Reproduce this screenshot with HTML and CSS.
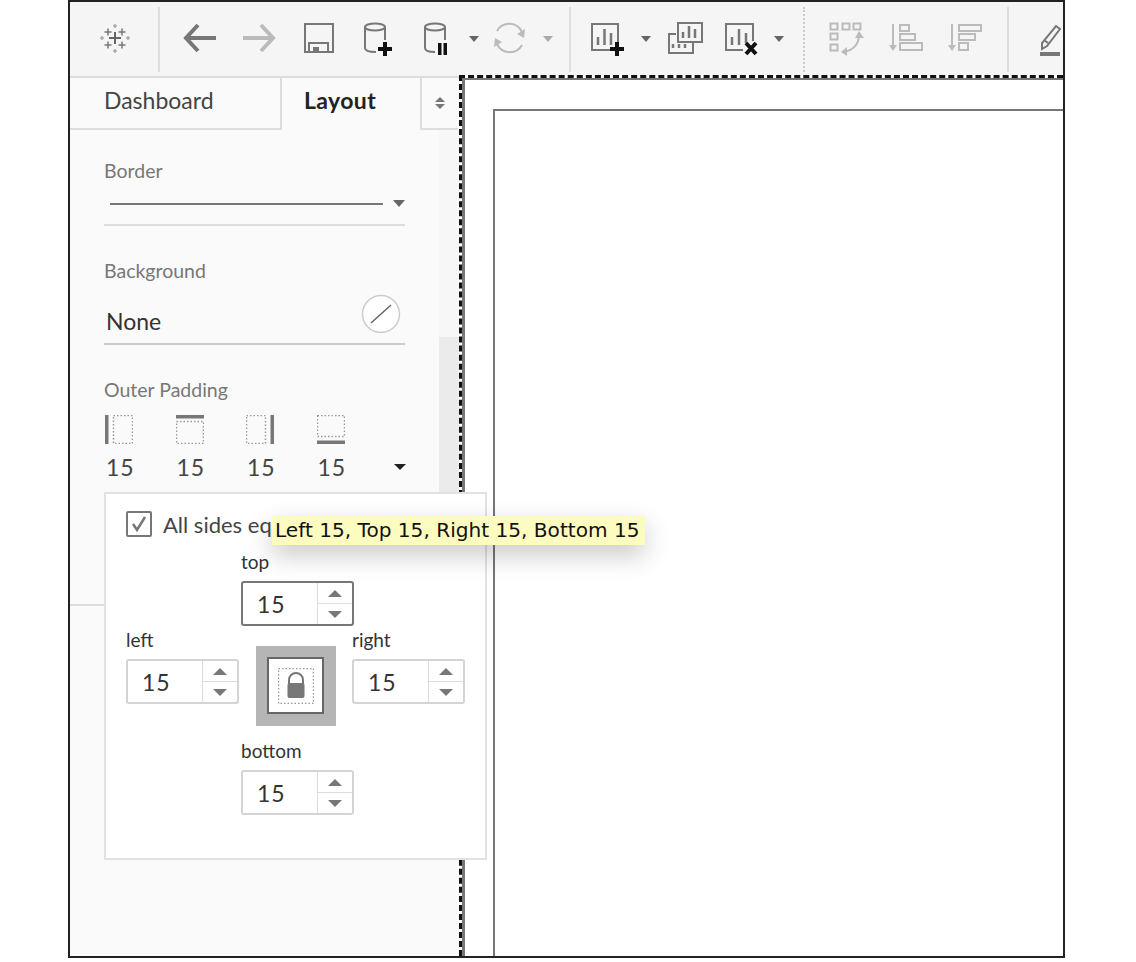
FILE: index.html
```html
<!DOCTYPE html>
<html lang="en">
<head>
    <meta charset="UTF-8">
    <meta name="viewport" content="width=device-width, initial-scale=1.0">
    <title>Dashboard Layout</title>
    <link rel="stylesheet" href="styles.css">
</head>
<body>
    <div class="window">
        <!-- Toolbar -->
        <div class="toolbar">
            <div class="tool-group logo-group">
                <svg class="tool" viewBox="0 0 36 36">
                    <path class="logo-big" d="M18 11V23M12 17H24"/>
                    <path class="logo-mid" d="M11 7.500V14.500M7.500 11H14.500M25 7.500V14.500M21.500 11H28.500M11 20.500V27.500M7.500 24H14.500M25 20.500V27.500M21.500 24H28.500"/>
                    <path class="logo-small" d="M18 3V7M16 5H20M5 15V19M3 17H7M31 15V19M29 17H33M18 28V32M16 30H20"/>
                </svg>
            </div>
            <div class="tool-group main-group">
                <svg class="tool" viewBox="0 0 36 36"><path class="thick" d="M34 17H5M16 4L4 17L16 30"/></svg>
                <svg class="tool" viewBox="0 0 36 36"><path class="thick faded" d="M2 17H31M20 4L32 17L20 30"/></svg>
                <svg class="tool" viewBox="0 0 36 36">
                    <rect class="line" x="5" y="3" width="28" height="28"/>
                    <path class="line" d="M9 31V22H28V31"/>
                    <rect class="solid" x="13" y="26" width="6" height="5"/>
                </svg>
                <svg class="tool" viewBox="0 0 36 36">
                    <ellipse class="line" cx="16" cy="6" rx="10" ry="3.5"/>
                    <path class="line" d="M6 6V27Q6 31 17 31M26 6V19"/>
                    <path class="mark" d="M26 21V35M19 28H33"/>
                </svg>
                <svg class="tool" viewBox="0 0 36 36">
                    <ellipse class="line" cx="17" cy="6" rx="10" ry="3.5"/>
                    <path class="line" d="M7 6V27Q7 31 17 31M27 6V19"/>
                    <rect class="black" x="20" y="22" width="3.5" height="12"/>
                    <rect class="black" x="25.5" y="22" width="3.5" height="12"/>
                </svg>
                <span class="caret"></span>
                <svg class="tool sync" viewBox="0 0 36 36">
                    <path class="line faded" d="M5 10A14 14 0 0 1 30 11M30 24A14 14 0 0 1 5 23"/>
                    <path class="solid faded" d="M33 8L32 17L25 13ZM2 26L3 17L10 21Z"/>
                </svg>
                <span class="caret faded"></span>
            </div>
            <div class="tool-group data-group">
                <svg class="tool" viewBox="0 0 36 36">
                    <path class="line" d="M24 29H4V3H30V22"/>
                    <path class="bars" d="M10 16V24M16.500 8V24M23 12V24"/>
                    <path class="mark" d="M29 21V35M22 28H36"/>
                </svg>
                <span class="caret"></span>
                <svg class="tool" viewBox="0 0 36 36">
                    <rect class="line" x="10" y="2" width="24" height="19"/>
                    <path class="bars" d="M15 11V17M21 5V17M27 8V17"/>
                    <path class="line" d="M8 13H1V32H25V22"/>
                    <path class="bars" d="M5 23V27M11 23V27M17 23V27"/>
                </svg>
                <svg class="tool" viewBox="0 0 36 36">
                    <path class="line" d="M22 29H5V3H32V20"/>
                    <path class="bars" d="M11 16V24M18 8V24M25 12V22"/>
                    <path class="mark" d="M25 22L35 33M35 22L25 33"/>
                </svg>
                <span class="caret"></span>
            </div>
            <div class="tool-group sort-group">
                <svg class="tool" viewBox="0 0 36 36">
                    <g class="line faded">
                        <rect x="1.500" y="2.500" width="7" height="6"/>
                        <rect x="13.500" y="2.500" width="7" height="6"/>
                        <rect x="24.500" y="2.500" width="7" height="6"/>
                        <rect x="1.500" y="12.500" width="7" height="6"/>
                        <rect x="1.500" y="23.500" width="7" height="6"/>
                        <path d="M30 15Q29 28 15 31"/>
                    </g>
                    <path class="solid faded" d="M30 10L35 17H26ZM12 31L18 26V35Z"/>
                </svg>
                <svg class="tool" viewBox="0 0 36 36">
                    <g class="line faded">
                        <path d="M5 3V27"/>
                        <rect x="12" y="4" width="9" height="6"/>
                        <rect x="12" y="13" width="15" height="6"/>
                        <rect x="12" y="22" width="22" height="7"/>
                    </g>
                    <path class="solid faded" d="M1 24H9L5 30Z"/>
                </svg>
                <svg class="tool" viewBox="0 0 36 36">
                    <g class="line faded">
                        <path d="M5 3V27"/>
                        <rect x="12" y="4" width="22" height="6"/>
                        <rect x="12" y="13" width="16" height="6"/>
                        <rect x="12" y="22" width="9" height="7"/>
                    </g>
                    <path class="solid faded" d="M1 24H9L5 30Z"/>
                </svg>
            </div>
            <div class="tool-group pen-group">
                <svg class="tool" viewBox="0 0 36 36">
                    <path class="line" d="M20 5L24 8L11 25L6 28L6 22ZM8 19L12 22"/>
                    <path class="thick" d="M4 33H24"/>
                </svg>
            </div>
        </div>

        <div class="workspace">
            <!-- Side panel -->
            <div class="panel">
                <div class="tabs">
                    <div class="tab">Dashboard</div>
                    <div class="tab tab-active">Layout</div>
                    <div class="tab tab-menu">
                        <span class="sort-up"></span>
                        <span class="sort-down"></span>
                    </div>
                </div>

                <div class="panel-body">
                    <div class="label">Border</div>
                    <div class="select-row">
                        <span class="border-line"></span>
                        <span class="caret"></span>
                    </div>

                    <div class="label section">Background</div>
                    <div class="color-row">
                        <span class="color-name">None</span>
                        <svg class="no-color" viewBox="0 0 40 40">
                            <circle cx="20" cy="20" r="18.500"/>
                            <path d="M10 29L30 11"/>
                        </svg>
                    </div>

                    <div class="label section">Outer Padding</div>
                    <div class="padding-row">
                        <div class="padding-item">
                            <svg class="side-icon" viewBox="0 0 28 29">
                                <rect class="dots" x="8.500" y="0.500" width="19" height="28"/>
                                <rect class="solid" x="0" y="0" width="3.500" height="29"/>
                            </svg>
                            <div class="value">15</div>
                        </div>
                        <div class="padding-item">
                            <svg class="side-icon" viewBox="0 0 28 29">
                                <rect class="dots" x="0.500" y="6.500" width="27" height="22"/>
                                <rect class="solid" x="0" y="0" width="28" height="3.500"/>
                            </svg>
                            <div class="value">15</div>
                        </div>
                        <div class="padding-item">
                            <svg class="side-icon" viewBox="0 0 28 29">
                                <rect class="dots" x="0.500" y="0.500" width="19" height="28"/>
                                <rect class="solid" x="24.500" y="0" width="3.500" height="29"/>
                            </svg>
                            <div class="value">15</div>
                        </div>
                        <div class="padding-item">
                            <svg class="side-icon" viewBox="0 0 28 29">
                                <rect class="dots" x="0.500" y="0.500" width="27" height="21"/>
                                <rect class="solid" x="0" y="25.500" width="28" height="3.500"/>
                            </svg>
                            <div class="value">15</div>
                        </div>
                        <span class="caret caret-dark"></span>
                    </div>
                    <div class="section-end"></div>
                </div>

                <div class="scroll-track">
                    <div class="scroll-thumb"></div>
                </div>

                <!-- Padding pop-up -->
                <div class="popover">
                    <div class="equal-row">
                        <svg class="checkbox" viewBox="0 0 26 26">
                            <rect x="1" y="1" width="24" height="24" rx="1"/>
                            <path d="M7 13L11 19L19 6"/>
                        </svg>
                        <span class="equal-text">All sides equal</span>
                    </div>
                    <div class="side-grid">
                        <div class="side side-top">
                            <div class="side-label">top</div>
                            <div class="spinner spinner-focus">
                                <span class="spinner-value">15</span>
                                <span class="spinner-btns"><span class="btn-up"></span><span class="btn-down"></span></span>
                            </div>
                        </div>
                        <div class="side side-left">
                            <div class="side-label">left</div>
                            <div class="spinner">
                                <span class="spinner-value">15</span>
                                <span class="spinner-btns"><span class="btn-up"></span><span class="btn-down"></span></span>
                            </div>
                        </div>
                        <div class="lock-box">
                            <div class="lock-inner">
                                <svg class="lock" viewBox="0 0 36 36">
                                    <rect class="dots" x="0.500" y="0.500" width="35" height="35"/>
                                    <path class="shackle" d="M11 16V12A7 7 0 0 1 25 12V16"/>
                                    <rect class="solid" x="9.500" y="15" width="17" height="15" rx="2"/>
                                </svg>
                            </div>
                        </div>
                        <div class="side side-right">
                            <div class="side-label">right</div>
                            <div class="spinner">
                                <span class="spinner-value">15</span>
                                <span class="spinner-btns"><span class="btn-up"></span><span class="btn-down"></span></span>
                            </div>
                        </div>
                        <div class="side side-bottom">
                            <div class="side-label">bottom</div>
                            <div class="spinner">
                                <span class="spinner-value">15</span>
                                <span class="spinner-btns"><span class="btn-up"></span><span class="btn-down"></span></span>
                            </div>
                        </div>
                    </div>
                    <div class="tooltip">Left 15, Top 15, Right 15, Bottom 15</div>
                </div>
            </div>

            <!-- Canvas -->
            <div class="canvas-frame">
                <div class="canvas">
                    <div class="sheet"></div>
                </div>
            </div>
        </div>
    </div>
</body>
</html>
```

FILE: styles.css
```css
* {
    box-sizing: border-box;
}
body {
    font-family: Lato, "Open Sans", sans-serif;
    margin: 0;
    padding: 0;
    background-color: #fff;
    color: #333;
}
.window {
    width: 997px;
    height: 958px;
    margin-left: 68px;
    border: 2px solid #222;
    display: flex;
    flex-direction: column;
    overflow: hidden;
}

/* Toolbar */
.toolbar {
    height: 74px;
    flex: none;
    display: flex;
    align-items: center;
    background-color: #f5f5f5;
}
.tool-group {
    height: 65px;
    display: flex;
    align-items: center;
    flex: none;
    border-right: 2px solid #ddd;
}
.logo-group {
    padding: 0 25px 0 27px;
}
.main-group {
    gap: 15px;
    padding: 0 16px 0 22px;
}
.main-group .tool + .tool {
    margin-left: 8px;
}
.main-group .tool.sync {
    margin-left: -2px;
}
.data-group {
    gap: 17px;
    padding: 0 19px 0 17px;
    border-right: 2px dotted #ccc;
}
.sort-group {
    gap: 23px;
    padding: 0 24px 0 24px;
}
.pen-group {
    padding-left: 27px;
    border-right: none;
}
.tool {
    width: 36px;
    height: 36px;
    flex: none;
    overflow: visible;
}
.line {
    fill: none;
    stroke: #777;
    stroke-width: 2;
}
.thick {
    fill: none;
    stroke: #777;
    stroke-width: 4;
}
.bars {
    fill: none;
    stroke: #777;
    stroke-width: 2.500;
}
.solid {
    fill: #777;
}
.black {
    fill: #111;
}
.mark {
    fill: none;
    stroke: #111;
    stroke-width: 4;
}
.line.faded, .thick.faded {
    stroke: #bbb;
}
.solid.faded {
    fill: #bbb;
}
.logo-big {
    fill: none;
    stroke: #666;
    stroke-width: 2;
}
.logo-mid {
    fill: none;
    stroke: #777;
    stroke-width: 1.500;
}
.logo-small {
    fill: none;
    stroke: #aaa;
    stroke-width: 1.500;
}
.caret {
    width: 0;
    height: 0;
    flex: none;
    border-left: 5px solid transparent;
    border-right: 5px solid transparent;
    border-top: 6px solid #666;
}
.caret.faded {
    border-top-color: #aaa;
}

/* Workspace */
.workspace {
    flex: 1;
    display: flex;
    min-height: 0;
}
.panel {
    width: 389px;
    flex: none;
    position: relative;
    z-index: 1;
    background-color: #fafafa;
    border-top: 2px solid #ddd;
}
.tabs {
    display: flex;
    height: 52px;
    font-size: 23px;
}
.tab {
    width: 212px;
    padding: 8px 0 0 34px;
    color: #444;
    border-right: 2px solid #ddd;
    border-bottom: 2px solid #ddd;
}
.tab-active {
    width: 138px;
    padding-left: 22px;
    font-weight: bold;
    letter-spacing: 0.4px;
    color: #222;
    border-right: none;
    border-bottom: none;
}
.tab-menu {
    width: 38px;
    padding: 0;
    display: flex;
    flex-direction: column;
    align-items: center;
    justify-content: center;
    gap: 2px;
    border-right: none;
    border-left: 2px solid #ddd;
}
.sort-up, .sort-down {
    width: 0;
    height: 0;
    border-left: 5px solid transparent;
    border-right: 5px solid transparent;
}
.sort-up {
    border-bottom: 5px solid #777;
}
.sort-down {
    border-top: 5px solid #777;
}

/* Panel content */
.panel-body {
    padding: 29px 0 0 34px;
}
.label {
    font-size: 19.500px;
    line-height: 24px;
    color: #777;
}
.label.section {
    margin-top: 33px;
}
.select-row {
    width: 301px;
    height: 43px;
    padding-left: 6px;
    display: flex;
    align-items: center;
    gap: 10px;
    border-bottom: 2px solid #ddd;
}
.select-row .caret {
    border-left-width: 6px;
    border-right-width: 6px;
    border-top-width: 7px;
}
.border-line {
    flex: 1;
    height: 2px;
    background-color: #777;
}
.color-row {
    width: 301px;
    height: 62px;
    padding: 11px 4px 0 2px;
    display: flex;
    justify-content: space-between;
    align-items: flex-start;
    border-bottom: 2px solid #ccc;
}
.color-name {
    margin-top: 11px;
    font-size: 23px;
    line-height: 32px;
    color: #333;
}
.no-color {
    width: 40px;
    height: 40px;
}
.no-color circle {
    fill: #fff;
    stroke: #ccc;
    stroke-width: 1.500;
}
.no-color path {
    fill: none;
    stroke: #666;
    stroke-width: 1.500;
}
.padding-row {
    display: flex;
    margin: 13px 0 0 1px;
}
.padding-item {
    width: 70.500px;
}
.side-icon {
    display: block;
    width: 28px;
    height: 29px;
}
.dots {
    fill: none;
    stroke: #999;
    stroke-width: 1.500;
    stroke-dasharray: 1.500 2;
}
.value {
    margin-top: 8px;
    padding-left: 1px;
    font-size: 23px;
    line-height: 30px;
    letter-spacing: 1px;
    color: #444;
}
.caret-dark {
    align-self: flex-end;
    margin: 0 0 12px 7px;
    border-left-width: 6px;
    border-right-width: 6px;
    border-top-color: #222;
}
.section-end {
    margin: 122px 0 0 -34px;
    border-top: 2px solid #ddd;
}
.scroll-track {
    position: absolute;
    top: 52px;
    right: 0;
    bottom: 100px;
    width: 20px;
    padding-top: 207px;
    background-color: #f7f7f7;
}
.scroll-thumb {
    height: 280px;
    background-color: #ebebeb;
}

/* Pop-up */
.popover {
    position: absolute;
    top: 414px;
    left: 34px;
    width: 383px;
    height: 368px;
    padding: 15px 22px 0 20px;
    background-color: #fff;
    border: 2px solid #e2e2e2;
}
.equal-row {
    display: flex;
    align-items: center;
    gap: 11px;
    font-size: 22px;
    line-height: 26px;
    color: #444;
}
.equal-text {
    margin-top: 3px;
}
.checkbox {
    width: 26px;
    height: 26px;
    flex: none;
}
.checkbox rect {
    fill: #fff;
    stroke: #777;
    stroke-width: 2;
}
.checkbox path {
    fill: none;
    stroke: #777;
    stroke-width: 2.500;
}
.side-grid {
    display: grid;
    grid-template-columns: 115px 111px 113px;
    grid-template-rows: 75px 114px 75px;
    margin-top: 12px;
}
.side-top {
    grid-column: 2;
    grid-row: 1;
}
.side-left {
    grid-column: 1;
    grid-row: 2;
}
.lock-box {
    grid-column: 2;
    grid-row: 2;
    justify-self: center;
    margin: 21px 2px 0 0;
    width: 80px;
    height: 80px;
    padding: 11px;
    background-color: #b5b5b5;
}
.side-right {
    grid-column: 3;
    grid-row: 2;
}
.side-bottom {
    grid-column: 2;
    grid-row: 3;
}
.side-label {
    font-size: 19px;
    line-height: 24px;
    color: #333;
}
.side-left, .side-right {
    padding-top: 3px;
}
.lock-inner {
    width: 57px;
    height: 57px;
    display: flex;
    align-items: center;
    justify-content: center;
    background-color: #fff;
    border: 2px solid #666;
}
.lock {
    width: 36px;
    height: 36px;
    margin-left: 1px;
}
.shackle {
    fill: none;
    stroke: #777;
    stroke-width: 2;
}
.spinner {
    width: 113px;
    height: 45px;
    margin-top: 7px;
    display: flex;
    background-color: #fff;
    border: 2px solid #d4d4d4;
    border-radius: 3px;
}
.spinner-focus {
    border-color: #777;
}
.spinner-value {
    width: 74px;
    padding-left: 14px;
    font-size: 23px;
    line-height: 43px;
    letter-spacing: 1px;
    color: #333;
}
.spinner-btns {
    flex: 1;
    display: flex;
    flex-direction: column;
    border-left: 1px solid #ddd;
}
.btn-up, .btn-down {
    flex: 1;
    display: flex;
    align-items: center;
    justify-content: center;
}
.btn-up {
    border-bottom: 1px solid #ddd;
}
.btn-up::before {
    content: "";
    border-left: 7px solid transparent;
    border-right: 7px solid transparent;
    border-bottom: 7px solid #777;
}
.btn-down::before {
    content: "";
    border-left: 7px solid transparent;
    border-right: 7px solid transparent;
    border-top: 7px solid #777;
}
.tooltip {
    position: absolute;
    top: 22px;
    left: 166px;
    width: 373px;
    height: 29px;
    padding-left: 3px;
    font-family: "DejaVu Sans", sans-serif;
    font-size: 20.100px;
    line-height: 28px;
    white-space: nowrap;
    color: #111;
    background-color: #fdfcc0;
    box-shadow: 0 10px 26px rgba(0, 0, 0, 0.22);
}

/* Canvas */
.canvas-frame {
    flex: 1;
    min-width: 0;
    margin-top: -1px;
    background-color: #fff;
    border-top: 3px dashed #111;
    border-left: 3px dashed #111;
}
.canvas {
    height: 100%;
    padding: 29px 0 0 28px;
    border-top: 2px solid #777;
    border-left: 3px solid #777;
}
.sheet {
    height: 100%;
    background-color: #fff;
    border-top: 2px solid #777;
    border-left: 2px solid #777;
}
```
